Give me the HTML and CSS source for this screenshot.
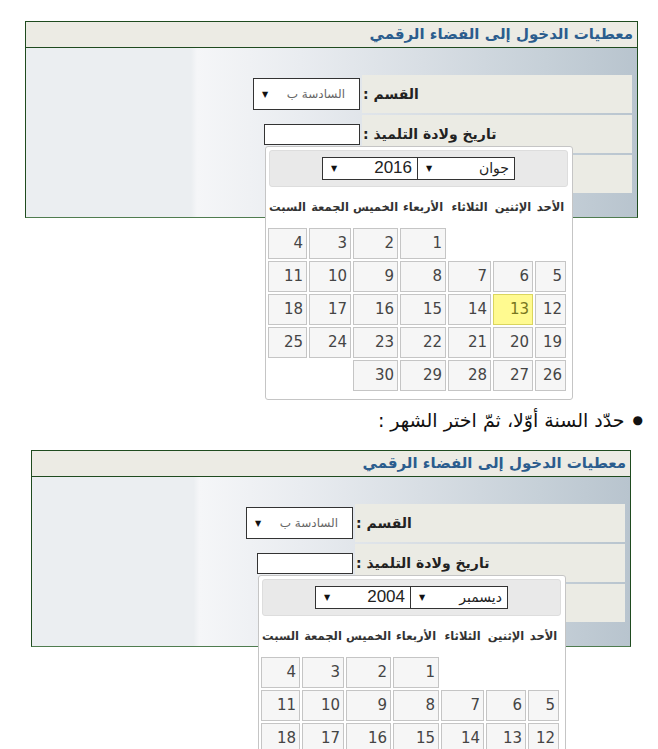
FILE: index.html
```html
<!DOCTYPE html>
<html lang="ar">
<head>
<meta charset="utf-8">
<title>معطيات الدخول</title>
<link rel="stylesheet" href="styles.css">
</head>
<body>
<div class="shot shot-a">
  <div class="panel">
    <div class="panel-head">معطيات الدخول إلى الفضاء الرقمي</div>
    <div class="panel-body">
      <div class="row">
        <div class="label">القسم :</div>
        <div class="ctrl"><div class="select"><span class="sel-text">السادسة ب</span><span class="arrow">▼</span></div></div>
      </div>
      <div class="row">
        <div class="label">تاريخ ولادة التلميذ :</div>
        <div class="ctrl">
          <div class="date-field">
            <div class="datepicker">
              <div class="dp-head">
                <div class="dp-select month"><span>جوان</span><span class="arrow">▼</span></div>
                <div class="dp-select year"><span class="num">2016</span><span class="arrow">▼</span></div>
              </div>
              <div class="dp-days">
                <div>الأحد</div><div>الإثنين</div><div>الثلاثاء</div><div>الأربعاء</div><div>الخميس</div><div>الجمعة</div><div>السبت</div>
              </div>
              <div class="dp-grid">
                <span class="empty"></span><span class="empty"></span><span class="empty"></span><a>1</a><a>2</a><a>3</a><a>4</a>
                <a>5</a><a>6</a><a>7</a><a>8</a><a>9</a><a>10</a><a>11</a>
                <a>12</a><a class="today">13</a><a>14</a><a>15</a><a>16</a><a>17</a><a>18</a>
                <a>19</a><a>20</a><a>21</a><a>22</a><a>23</a><a>24</a><a>25</a>
                <a>26</a><a>27</a><a>28</a><a>29</a><a>30</a><span class="empty"></span><span class="empty"></span>
              </div>
            </div>
          </div>
        </div>
      </div>
      <div class="row">
        <div class="label"></div>
        <div class="ctrl"></div>
      </div>
    </div>
  </div>
</div>

<p class="note"><span class="bullet">●</span><span>حدّد السنة أوّلا، ثمّ اختر الشهر :</span></p>

<div class="shot shot-b">
  <div class="panel">
    <div class="panel-head">معطيات الدخول إلى الفضاء الرقمي</div>
    <div class="panel-body">
      <div class="row">
        <div class="label">القسم :</div>
        <div class="ctrl"><div class="select"><span class="sel-text">السادسة ب</span><span class="arrow">▼</span></div></div>
      </div>
      <div class="row">
        <div class="label">تاريخ ولادة التلميذ :</div>
        <div class="ctrl">
          <div class="date-field">
            <div class="datepicker">
              <div class="dp-head">
                <div class="dp-select month"><span>ديسمبر</span><span class="arrow">▼</span></div>
                <div class="dp-select year"><span class="num">2004</span><span class="arrow">▼</span></div>
              </div>
              <div class="dp-days">
                <div>الأحد</div><div>الإثنين</div><div>الثلاثاء</div><div>الأربعاء</div><div>الخميس</div><div>الجمعة</div><div>السبت</div>
              </div>
              <div class="dp-grid">
                <span class="empty"></span><span class="empty"></span><span class="empty"></span><a>1</a><a>2</a><a>3</a><a>4</a>
                <a>5</a><a>6</a><a>7</a><a>8</a><a>9</a><a>10</a><a>11</a>
                <a>12</a><a>13</a><a>14</a><a>15</a><a>16</a><a>17</a><a>18</a>
                <a>19</a><a>20</a><a>21</a><a>22</a><a>23</a><a>24</a><a>25</a>
                <a>26</a><a>27</a><a>28</a><a>29</a><a>30</a><a>31</a><span class="empty"></span>
              </div>
            </div>
          </div>
        </div>
      </div>
      <div class="row">
        <div class="label"></div>
        <div class="ctrl"></div>
      </div>
    </div>
  </div>
</div>
</body>
</html>
```

FILE: styles.css
```css
* { box-sizing: border-box; }

body {
  margin: 0;
  background: #ffffff;
  font-family: "DejaVu Sans", sans-serif;
  color: #222;
}

.shot { position: relative; }

.shot-a {
  padding: 21px 0 0 25px;
  height: 399px;
}

.shot-b {
  margin-top: 18px;
  padding-left: 31px;
  height: 420px;
}

.panel {
  direction: rtl;
  width: 613px;
  border: 1px solid #1f4b1f;
  border-bottom-color: #4f7c4f;
  background: #fff;
}

.shot-b .panel { width: 600px; }

.panel-head {
  height: 26px;
  line-height: 25px;
  background: #ecebe4;
  border-bottom: 1px solid #1f4b1f;
  color: #2b5d8e;
  font-weight: bold;
  font-size: 15px;
  padding-right: 4px;
  white-space: nowrap;
}

.panel-body {
  display: flex;
  flex-direction: column;
  gap: 2px;
  padding: 27px 5px 24px;
  background: linear-gradient(to right,
    #ebeef1 0%, #ebeef1 27%, #f5f6f8 28%, #e9ecf0 45%,
    #d8dee4 65%, #c6d0d8 85%, #b8c4ce 100%);
}

.row {
  display: flex;
  gap: 2px;
  height: 38px;
}

.label {
  width: 270px;
  flex: none;
  background: #ebebe4;
  display: flex;
  align-items: center;
  justify-content: flex-end;
  padding-left: 1px;
  font-weight: bold;
  font-size: 14px;
  color: #222;
  white-space: nowrap;
}

.ctrl {
  width: 107px;
  flex: none;
  display: flex;
  align-items: center;
}

.select {
  width: 107px;
  height: 32px;
  border: 1px solid #333;
  background: #fff;
  display: flex;
  align-items: center;
  justify-content: space-between;
  padding: 0 14px 0 8px;
  font-size: 12px;
  color: #666;
}

.arrow {
  font-size: 8px;
  color: #111;
  font-family: "DejaVu Sans", sans-serif;
}

.date-field {
  position: relative;
  width: 96px;
  height: 21px;
  border: 1px solid #333;
  background: #fff;
}

.datepicker {
  position: absolute;
  left: 0;
  top: 21px;
  width: 308px;
  background: #fff;
  border: 1px solid #c5c5c5;
  border-radius: 3px;
  padding: 3px 6px 8px 2px;
  z-index: 5;
  direction: rtl;
}

.dp-head {
  height: 37px;
  margin: 0 -2px 0 1px;
  background: #e9e9e9;
  border: 1px solid #dddddd;
  border-radius: 3px;
  display: flex;
  justify-content: center;
  align-items: center;
}

.dp-select {
  height: 23px;
  border: 1px solid #333;
  background: #fff;
  display: flex;
  align-items: center;
  justify-content: space-between;
  padding: 0 5px 0 8px;
  font-size: 14px;
  color: #222;
}

.dp-select.month { width: 98px; }
.dp-select.year { width: 96px; margin-right: -1px; }

.num {
  font-family: "Liberation Sans", sans-serif;
  font-size: 17px;
}

.dp-days {
  display: grid;
  grid-template-columns: 31px 40px 43px 46px 45px 42px 39px;
  column-gap: 2px;
  height: 40px;
  align-items: center;
  justify-items: center;
  font-weight: bold;
  font-size: 11.5px;
  color: #333;
  white-space: nowrap;
}

.dp-grid {
  display: grid;
  grid-template-columns: 31px 40px 43px 46px 45px 42px 39px;
  grid-auto-rows: 31px;
  gap: 2px;
  margin-top: 1px;
}

.dp-grid a {
  border: 1px solid #c5c5c5;
  background: #f6f6f6;
  color: #454545;
  font-size: 15px;
  line-height: 29px;
  text-align: right;
  padding-right: 3px;
  direction: ltr;
}

.dp-grid a.today {
  border-color: #dad55e;
  background: #fffa90;
  color: #777620;
}

.note {
  direction: rtl;
  margin: 9px 0 0;
  padding-right: 15px;
  display: flex;
  align-items: center;
  gap: 8px;
  font-size: 19px;
  line-height: 24px;
  color: #111;
}

.bullet {
  font-size: 12px;
}
```
